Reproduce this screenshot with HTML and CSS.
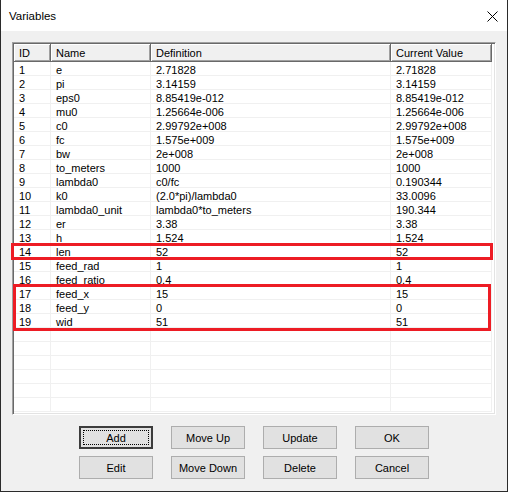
FILE: index.html
```html
<!DOCTYPE html>
<html>
<head>
<meta charset="utf-8">
<link rel="stylesheet" href="styles.css">
</head>
<body>
<div class="window">
  <div class="titlebar">
    <span class="title">Variables</span>
    <svg class="close" width="11" height="11" viewBox="0 0 11 11"><path d="M0.5 0.5 L10.5 10.5 M10.5 0.5 L0.5 10.5" stroke="#000" stroke-width="1" fill="none"/></svg>
  </div>
  <div class="content">
    <div class="list">
      <div class="row head">
        <div class="hc">ID</div><div class="hc">Name</div><div class="hc">Definition</div><div class="hc">Current Value</div>
      </div>
      <div class="row"><div class="c">1</div><div class="c">e</div><div class="c">2.71828</div><div class="c">2.71828</div></div>
      <div class="row"><div class="c">2</div><div class="c">pi</div><div class="c">3.14159</div><div class="c">3.14159</div></div>
      <div class="row"><div class="c">3</div><div class="c">eps0</div><div class="c">8.85419e-012</div><div class="c">8.85419e-012</div></div>
      <div class="row"><div class="c">4</div><div class="c">mu0</div><div class="c">1.25664e-006</div><div class="c">1.25664e-006</div></div>
      <div class="row"><div class="c">5</div><div class="c">c0</div><div class="c">2.99792e+008</div><div class="c">2.99792e+008</div></div>
      <div class="row"><div class="c">6</div><div class="c">fc</div><div class="c">1.575e+009</div><div class="c">1.575e+009</div></div>
      <div class="row"><div class="c">7</div><div class="c">bw</div><div class="c">2e+008</div><div class="c">2e+008</div></div>
      <div class="row"><div class="c">8</div><div class="c">to_meters</div><div class="c">1000</div><div class="c">1000</div></div>
      <div class="row"><div class="c">9</div><div class="c">lambda0</div><div class="c">c0/fc</div><div class="c">0.190344</div></div>
      <div class="row"><div class="c">10</div><div class="c">k0</div><div class="c">(2.0*pi)/lambda0</div><div class="c">33.0096</div></div>
      <div class="row"><div class="c">11</div><div class="c">lambda0_unit</div><div class="c">lambda0*to_meters</div><div class="c">190.344</div></div>
      <div class="row"><div class="c">12</div><div class="c">er</div><div class="c">3.38</div><div class="c">3.38</div></div>
      <div class="row"><div class="c">13</div><div class="c">h</div><div class="c">1.524</div><div class="c">1.524</div></div>
      <div class="row"><div class="c">14</div><div class="c">len</div><div class="c">52</div><div class="c">52</div></div>
      <div class="row"><div class="c">15</div><div class="c">feed_rad</div><div class="c">1</div><div class="c">1</div></div>
      <div class="row"><div class="c">16</div><div class="c">feed_ratio</div><div class="c">0.4</div><div class="c">0.4</div></div>
      <div class="row"><div class="c">17</div><div class="c">feed_x</div><div class="c">15</div><div class="c">15</div></div>
      <div class="row"><div class="c">18</div><div class="c">feed_y</div><div class="c">0</div><div class="c">0</div></div>
      <div class="row"><div class="c">19</div><div class="c">wid</div><div class="c">51</div><div class="c">51</div></div>
      <div class="row"><div class="c"></div><div class="c"></div><div class="c"></div><div class="c"></div></div>
      <div class="row"><div class="c"></div><div class="c"></div><div class="c"></div><div class="c"></div></div>
      <div class="row"><div class="c"></div><div class="c"></div><div class="c"></div><div class="c"></div></div>
      <div class="row"><div class="c"></div><div class="c"></div><div class="c"></div><div class="c"></div></div>
      <div class="row"><div class="c"></div><div class="c"></div><div class="c"></div><div class="c"></div></div>
      <div class="row"><div class="c"></div><div class="c"></div><div class="c"></div><div class="c"></div></div>
    </div>
    <div class="buttons">
      <button class="btn default">Add</button>
      <button class="btn">Move Up</button>
      <button class="btn">Update</button>
      <button class="btn">OK</button>
      <button class="btn">Edit</button>
      <button class="btn">Move Down</button>
      <button class="btn">Delete</button>
      <button class="btn">Cancel</button>
    </div>
  </div>
  <div class="mark mark1"></div>
  <div class="mark mark2"></div>
</div>
</body>
</html>
```
FILE: styles.css
```css
html, body {
  margin: 0;
  padding: 0;
  background: #f0f0f0;
}
.window {
  position: relative;
  width: 508px;
  height: 492px;
  box-sizing: border-box;
  border: 1px solid #2b2b2b;
  border-top: none;
  background: #f0f0f0;
  display: flex;
  flex-direction: column;
  font-family: "Liberation Sans", Arial, sans-serif;
  font-size: 11px;
  color: #000;
}
.titlebar {
  height: 31px;
  background: #fff;
  display: flex;
  align-items: center;
  justify-content: space-between;
  padding: 0 9px 0 8px;
  flex: none;
}
.title {
  font-size: 11.5px;
  padding-top: 1px;
}
.close {
  display: block;
  margin-top: 1px;
}
.content {
  padding: 11px 11px 0 11px;
}
.list {
  width: 484px;
  height: 373px;
  box-sizing: border-box;
  border-top: 1px solid #a0a0a0;
  border-left: 1px solid #a0a0a0;
  border-right: 1px solid #fff;
  border-bottom: 1px solid #fff;
  box-shadow: inset 1px 1px #696969, inset -1px -1px #e3e3e3;
  padding: 1px;
  background: #fff;
  overflow: hidden;
}
.row {
  display: grid;
  grid-template-columns: 37px 100px 240px 101px;
}
.head .hc {
  height: 18px;
  box-sizing: border-box;
  background: #f0f0f0;
  border-right: 1px solid #696969;
  border-bottom: 1px solid #696969;
  box-shadow: inset 1px 1px #fff, inset -1px -1px #a0a0a0;
  padding: 3px 0 0 5px;
  line-height: 12px;
  white-space: nowrap;
}
.c {
  height: 10px;
  padding: 3px 0 0 5px;
  line-height: 10px;
  border-right: 1px solid #f0f0f0;
  border-bottom: 1px solid #f0f0f0;
  white-space: nowrap;
}
.buttons {
  display: grid;
  grid-template-columns: repeat(4, 74px);
  column-gap: 18px;
  row-gap: 7px;
  padding-left: 67px;
  margin-top: 11px;
}
.btn {
  height: 23px;
  margin: 0;
  padding: 0;
  background: #e1e1e1;
  border: 1px solid #adadad;
  font-family: "Liberation Sans", Arial, sans-serif;
  font-size: 11px;
  color: #000;
}
.btn.default {
  border: 2px solid #3c3c3c;
  outline: 1px dotted #000;
  outline-offset: -5px;
}
.mark {
  position: absolute;
  border: 3px solid #ed1c24;
  box-sizing: border-box;
}
.mark1 {
  left: 10px;
  top: 243px;
  width: 482px;
  height: 17px;
}
.mark2 {
  left: 12px;
  top: 284px;
  width: 478px;
  height: 47px;
}
```
